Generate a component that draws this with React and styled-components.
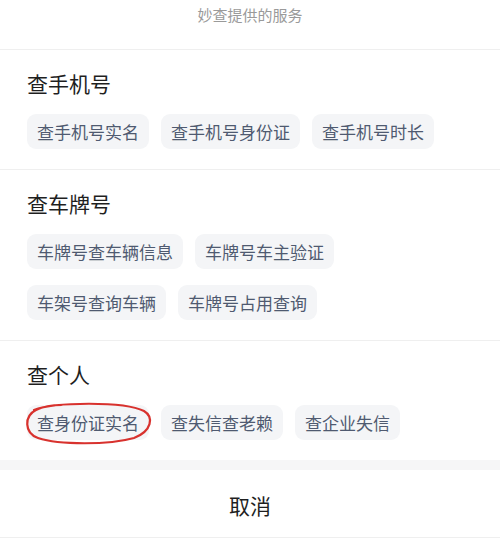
import React from "react";
import styled, { createGlobalStyle } from "styled-components";

const Global = createGlobalStyle`
  html, body { margin: 0; padding: 0; background: #ffffff; }
  body { font-family: "Noto Sans CJK SC", "Noto Sans", sans-serif; }
  * { box-sizing: border-box; }
`;

const Sheet = styled.div`
  width: 500px;
  height: 540px;
  background: #fff;
  display: flex;
  flex-direction: column;
  overflow: hidden;
`;

const Header = styled.div`
  height: 50px;
  padding-top: 3px;
  text-align: center;
  font-size: 15px;
  line-height: 24px;
  color: #9a9a9a;
  border-bottom: 1px solid #efefef;
`;

const Section = styled.section`
  padding: 19px 27px 20px;
  border-bottom: ${(p) => (p.$last ? "none" : "1px solid #efefef")};
  display: flex;
  flex-direction: column;
  gap: 17px;
`;

const Title = styled.h3`
  margin: 0;
  font-size: 21px;
  line-height: 28px;
  font-weight: 400;
  color: #1f1f1f;
`;

const ChipWrap = styled.div`
  display: flex;
  flex-wrap: wrap;
  column-gap: 12px;
  row-gap: 16px;
`;

const Chip = styled.span`
  position: relative;
  display: inline-block;
  height: 35px;
  line-height: 35px;
  padding: 0 10px;
  font-size: 17px;
  color: #4f5a70;
  background: #f4f5f7;
  border-radius: 9px;
  white-space: nowrap;
`;

const Mark = styled.svg`
  position: absolute;
  left: -3px;
  top: -4px;
  width: 128px;
  height: 43px;
  pointer-events: none;
  overflow: visible;
`;

const Band = styled.div`
  height: 10px;
  background: #f6f6f7;
`;

const Cancel = styled.div`
  height: 68px;
  display: flex;
  align-items: center;
  justify-content: center;
  padding-top: 2px;
  font-size: 21px;
  color: #1f1f1f;
  border-bottom: 1px solid #efefef;
`;

const sections = [
  { title: "查手机号", items: ["查手机号实名", "查手机号身份证", "查手机号时长"] },
  { title: "查车牌号", items: ["车牌号查车辆信息", "车牌号车主验证", "车架号查询车辆", "车牌号占用查询"] },
  { title: "查个人", items: ["查身份证实名", "查失信查老赖", "查企业失信"], marked: 0 },
];

export default function App() {
  return (
    <>
      <Global />
      <Sheet>
        <Header>妙查提供的服务</Header>
        {sections.map((s, i) => (
          <Section key={s.title} $last={i === sections.length - 1}>
            <Title>{s.title}</Title>
            <ChipWrap>
              {s.items.map((it, j) => (
                <Chip key={it}>
                  {it}
                  {s.marked === j && (
                    <Mark viewBox="0 0 128 43">
                      <path
                        d="M10 9 C 30 1, 100 0, 120 10 C 130 16, 128 30, 110 37 C 85 44, 35 44, 14 37 C 0 32, 0 15, 12 9 C 20 5, 30 4, 38 4"
                        fill="none"
                        stroke="#d8322e"
                        strokeWidth="2.2"
                        strokeLinecap="round"
                      />
                    </Mark>
                  )}
                </Chip>
              ))}
            </ChipWrap>
          </Section>
        ))}
        <Band />
        <Cancel>取消</Cancel>
      </Sheet>
    </>
  );
}
